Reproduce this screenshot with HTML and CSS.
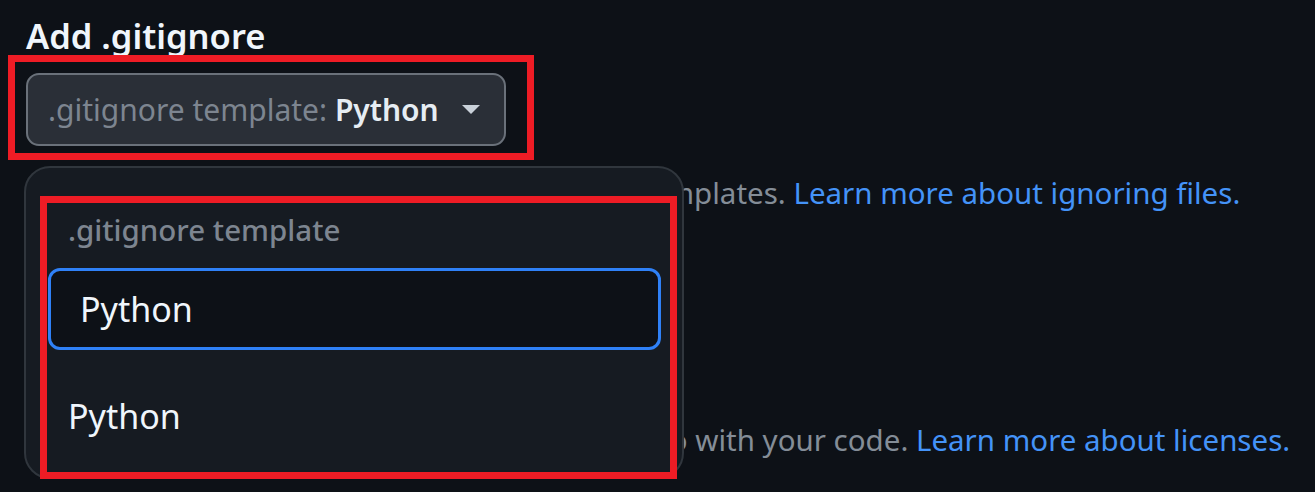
FILE: index.html
```html
<!DOCTYPE html>
<html>
<head>
<meta charset="utf-8">
<link rel="stylesheet" href="styles.css">
</head>
<body>
<div class="page">
  <h2 class="heading">Add .gitignore</h2>
  <div class="mark mark-button">
    <button class="select-btn">
      <span class="select-label">.gitignore template: </span><span class="select-value">Python</span>
      <svg class="caret" width="18" height="9" viewBox="0 0 18 9"><path d="M0 0h18L9 9z" fill="#c9d1d9"/></svg>
    </button>
  </div>
  <p class="note note-first">Choose which files not to track from a list of templates. <a class="link" href="#">Learn more about ignoring files.</a></p>
  <h2 class="heading heading-license">Choose a license</h2>
  <p class="note note-second">A license tells others what they can and can't do with your code. <a class="link" href="#">Learn more about licenses.</a></p>

  <div class="menu">
    <div class="mark mark-menu">
      <div class="menu-header">.gitignore template</div>
      <div class="menu-input">Python</div>
      <div class="menu-item">Python</div>
    </div>
  </div>
</div>
</body>
</html>
```

FILE: styles.css
```css
html, body {
  margin: 0;
  padding: 0;
  background: #0d1117;
}
body {
  font-family: "Noto Sans", "Liberation Sans", sans-serif;
  color: #e6edf3;
  width: 1315px;
  height: 492px;
  overflow: hidden;
}
.page {
  position: relative;
  padding: 0 0 0 8px;
  height: 492px;
}
.heading {
  margin: 0;
  padding: 16px 0 0 18px;
  font-size: 34.5px;
  line-height: 40px;
  font-weight: 600;
  color: #f0f6fc;
  height: 39px;
}
.mark {
  border: 7px solid #ee1c25;
  box-sizing: border-box;
}
.mark-button {
  position: relative;
  width: 526px;
  height: 105px;
  padding: 11px 0 0 11px;
}
.select-btn {
  display: flex;
  align-items: center;
  width: 480px;
  height: 73px;
  box-sizing: border-box;
  padding: 0 24px 0 20px;
  background: #2a2f37;
  border: 2px solid #6a717a;
  border-radius: 13px;
  font-family: inherit;
  font-size: 30px;
  cursor: pointer;
}
.select-label {
  color: #7d8590;
  white-space: pre;
}
.select-value {
  color: #e6edf3;
  font-weight: 600;
}
.caret {
  margin-left: auto;
}
.note {
  margin: 0;
  padding-left: 18px;
  font-size: 29.5px;
  line-height: 36px;
  color: #848d97;
  white-space: nowrap;
}
.note-first {
  margin-top: 15px;
}
.link {
  color: #4493f8;
  text-decoration: none;
}
.heading-license {
  padding-top: 120px;
  visibility: hidden;
}
.note-second {
  margin-top: 52px;
}
.menu {
  position: absolute;
  left: 24px;
  top: 166px;
  width: 660px;
  height: 313px;
  box-sizing: border-box;
  background: #161b22;
  border: 2px solid #30363d;
  border-radius: 26px;
  padding: 28px 5px 0 14px;
}
.mark-menu {
  height: 283px;
  display: flex;
  flex-direction: column;
  padding: 0 9px 0 1px;
}
.menu-header {
  padding: 12px 0 23px 20px;
  font-size: 29.5px;
  line-height: 30px;
  font-weight: 500;
  color: #7d8590;
}
.menu-input {
  height: 82px;
  box-sizing: border-box;
  border: 3px solid #2f81f7;
  border-radius: 12px;
  background: #0d1117;
  padding-left: 29px;
  display: flex;
  align-items: center;
  font-size: 34px;
  color: #f0f6fc;
}
.menu-item {
  padding: 48px 0 0 20px;
  font-size: 34px;
  line-height: 36px;
  color: #f0f6fc;
}
```
